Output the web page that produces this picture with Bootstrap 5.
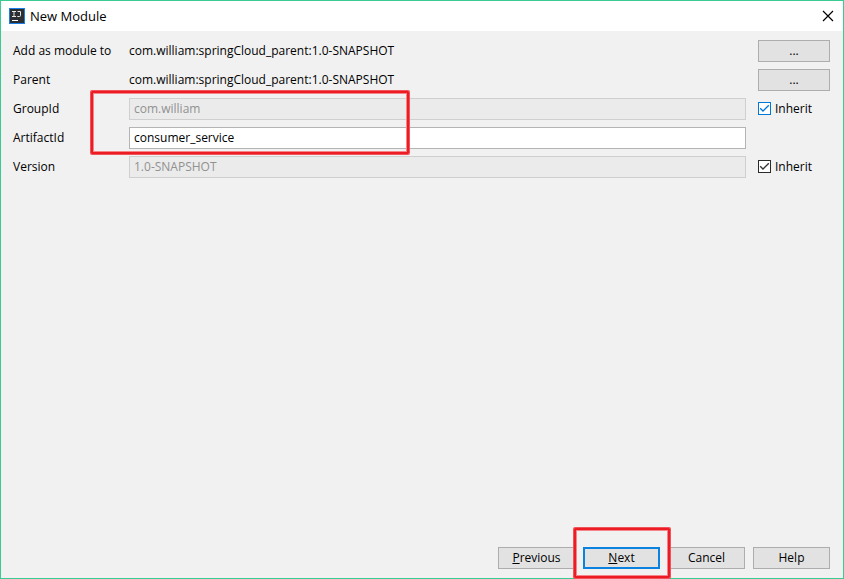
<!DOCTYPE html>
<html lang="en">
<head>
<meta charset="utf-8">
<meta name="viewport" content="width=device-width, initial-scale=1">
<title>New Module</title>
<link href="https://cdn.jsdelivr.net/npm/bootstrap@5.3.0/dist/css/bootstrap.min.css" rel="stylesheet">
<style>
  body { font-family: "Open Sans", "Noto Sans", sans-serif; font-size: 12px; line-height: 20px; color: #000; }
  .dialog { background: #f1f1f1; border: 1px solid #3acb92; }
  .titlebar { height: 30px; padding: 0 9px 0 8px; gap: 5px; font-size: 13px; }
  .titlebar button { line-height: 0; }
  .form-area { padding: 9px 13px 9px 12px; }
  .form-area, .form-pair { display: grid; gap: 7px; }
  .form-line { display: grid; grid-template-columns: 116px minmax(0, 1fr) 84px; min-height: 22px; align-items: center; }
  .form-line .side { margin-left: 12px; }
  .form-line .form-control { height: 22px; min-height: 22px; padding: 0 4px 2px; font-size: 12px; line-height: 18px; color: #000; border: 1px solid #b4b4b4; border-radius: 0; background: #fff; }
  .form-line .form-control:disabled { background: #ebebeb; border-color: #cfcfcf; color: #919191; opacity: 1; }
  .btn-dialog { height: 22px; padding: 0; font-size: 12px; line-height: 20px; color: #000; background: #e2e2e2; border: 1px solid #adadad; border-radius: 0; }
  .btn-dialog:hover { background: #e5f1fb; border-color: #0078d7; }
  .footer-area { padding: 9px 13px; gap: 8px; }
  .footer-area .btn-dialog { width: 77px; }
  .btn-dialog.is-default { border: 2px solid #0a82df; line-height: 18px; }
  .tick { appearance: none; width: 13px; height: 13px; margin: 0 0 1px; border: 1px solid #2b2b2b; background: #fff; }
  .tick:checked { background: #fff url("data:image/svg+xml,%3Csvg xmlns='http://www.w3.org/2000/svg' viewBox='0 0 11 11'%3E%3Cpath d='M1.2 5.2 4 8 9.8 2.2' fill='none' stroke='%23333' stroke-width='1.3'/%3E%3C/svg%3E") center/11px no-repeat; }
  .tick.is-active { border-color: #0078d7; }
  .tick.is-active:checked { background-image: url("data:image/svg+xml,%3Csvg xmlns='http://www.w3.org/2000/svg' viewBox='0 0 11 11'%3E%3Cpath d='M1.2 5.2 4 8 9.8 2.2' fill='none' stroke='%230078d7' stroke-width='1.3'/%3E%3C/svg%3E"); }
  .marker { position: absolute; z-index: 2; border: 2px solid #ed1c24; border-radius: 1px; box-shadow: 0 0 0 1px #f0545a, inset 0 0 0 1px #f4868a; pointer-events: none; }
  .marker-fields { left: 78px; top: -7px; bottom: -5px; width: 318px; }
  .marker-next { left: -9px; right: -10px; top: -19px; bottom: -9px; }
</style>
<script src="https://cdn.jsdelivr.net/npm/bootstrap@5.3.0/dist/js/bootstrap.bundle.min.js"></script>
</head>
<body>
<form class="dialog d-flex flex-column min-vh-100">
  <header class="titlebar d-flex align-items-center bg-white">
    <svg width="16" height="16" viewBox="0 0 16 16" aria-hidden="true">
      <rect x=".5" y=".5" width="15" height="15" fill="#2b2e33" stroke="#1a7fe8"/>
      <path d="M3 3.5h4M5 3.5v5M3 8.5h4M8.5 3.5h3v4q0 1-1 1H8.3" fill="none" stroke="#e8e8e8"/>
      <path d="M3 12.5h6" stroke="#fff"/>
    </svg>
    <span class="me-auto">New Module</span>
    <button type="button" class="btn border-0 p-0" aria-label="Close">
      <svg width="12" height="12" viewBox="0 0 12 12"><path d="M1 1l10 10M11 1L1 11" stroke="#000" stroke-width="1.2"/></svg>
    </button>
  </header>

  <main class="form-area">
    <div class="form-line">
      <span>Add as module to</span>
      <span>com.william:springCloud_parent:1.0-SNAPSHOT</span>
      <button type="button" class="btn btn-dialog side" aria-label="Choose module">...</button>
    </div>
    <div class="form-line">
      <span>Parent</span>
      <span>com.william:springCloud_parent:1.0-SNAPSHOT</span>
      <button type="button" class="btn btn-dialog side" aria-label="Choose parent">...</button>
    </div>
    <div class="form-pair position-relative">
      <div class="form-line">
        <label for="group">GroupId</label>
        <input id="group" class="form-control" value="com.william" disabled>
        <div class="side d-flex align-items-center gap-1">
          <input type="checkbox" id="inheritGroup" class="tick is-active" checked>
          <label for="inheritGroup">Inherit</label>
        </div>
      </div>
      <div class="form-line">
        <label for="artifact">ArtifactId</label>
        <input id="artifact" class="form-control" value="consumer_service">
      </div>
      <div class="marker marker-fields"></div>
    </div>
    <div class="form-line">
      <label for="version">Version</label>
      <input id="version" class="form-control" value="1.0-SNAPSHOT" disabled>
      <div class="side d-flex align-items-center gap-1">
        <input type="checkbox" id="inheritVersion" class="tick" checked>
        <label for="inheritVersion">Inherit</label>
      </div>
    </div>
  </main>

  <footer class="footer-area d-flex justify-content-end mt-auto">
    <button type="button" class="btn btn-dialog"><u>P</u>revious</button>
    <div class="position-relative d-flex">
      <button type="submit" class="btn btn-dialog is-default"><u>N</u>ext</button>
      <div class="marker marker-next"></div>
    </div>
    <button type="button" class="btn btn-dialog">Cancel</button>
    <button type="button" class="btn btn-dialog">Help</button>
  </footer>
</form>
</body>
</html>
